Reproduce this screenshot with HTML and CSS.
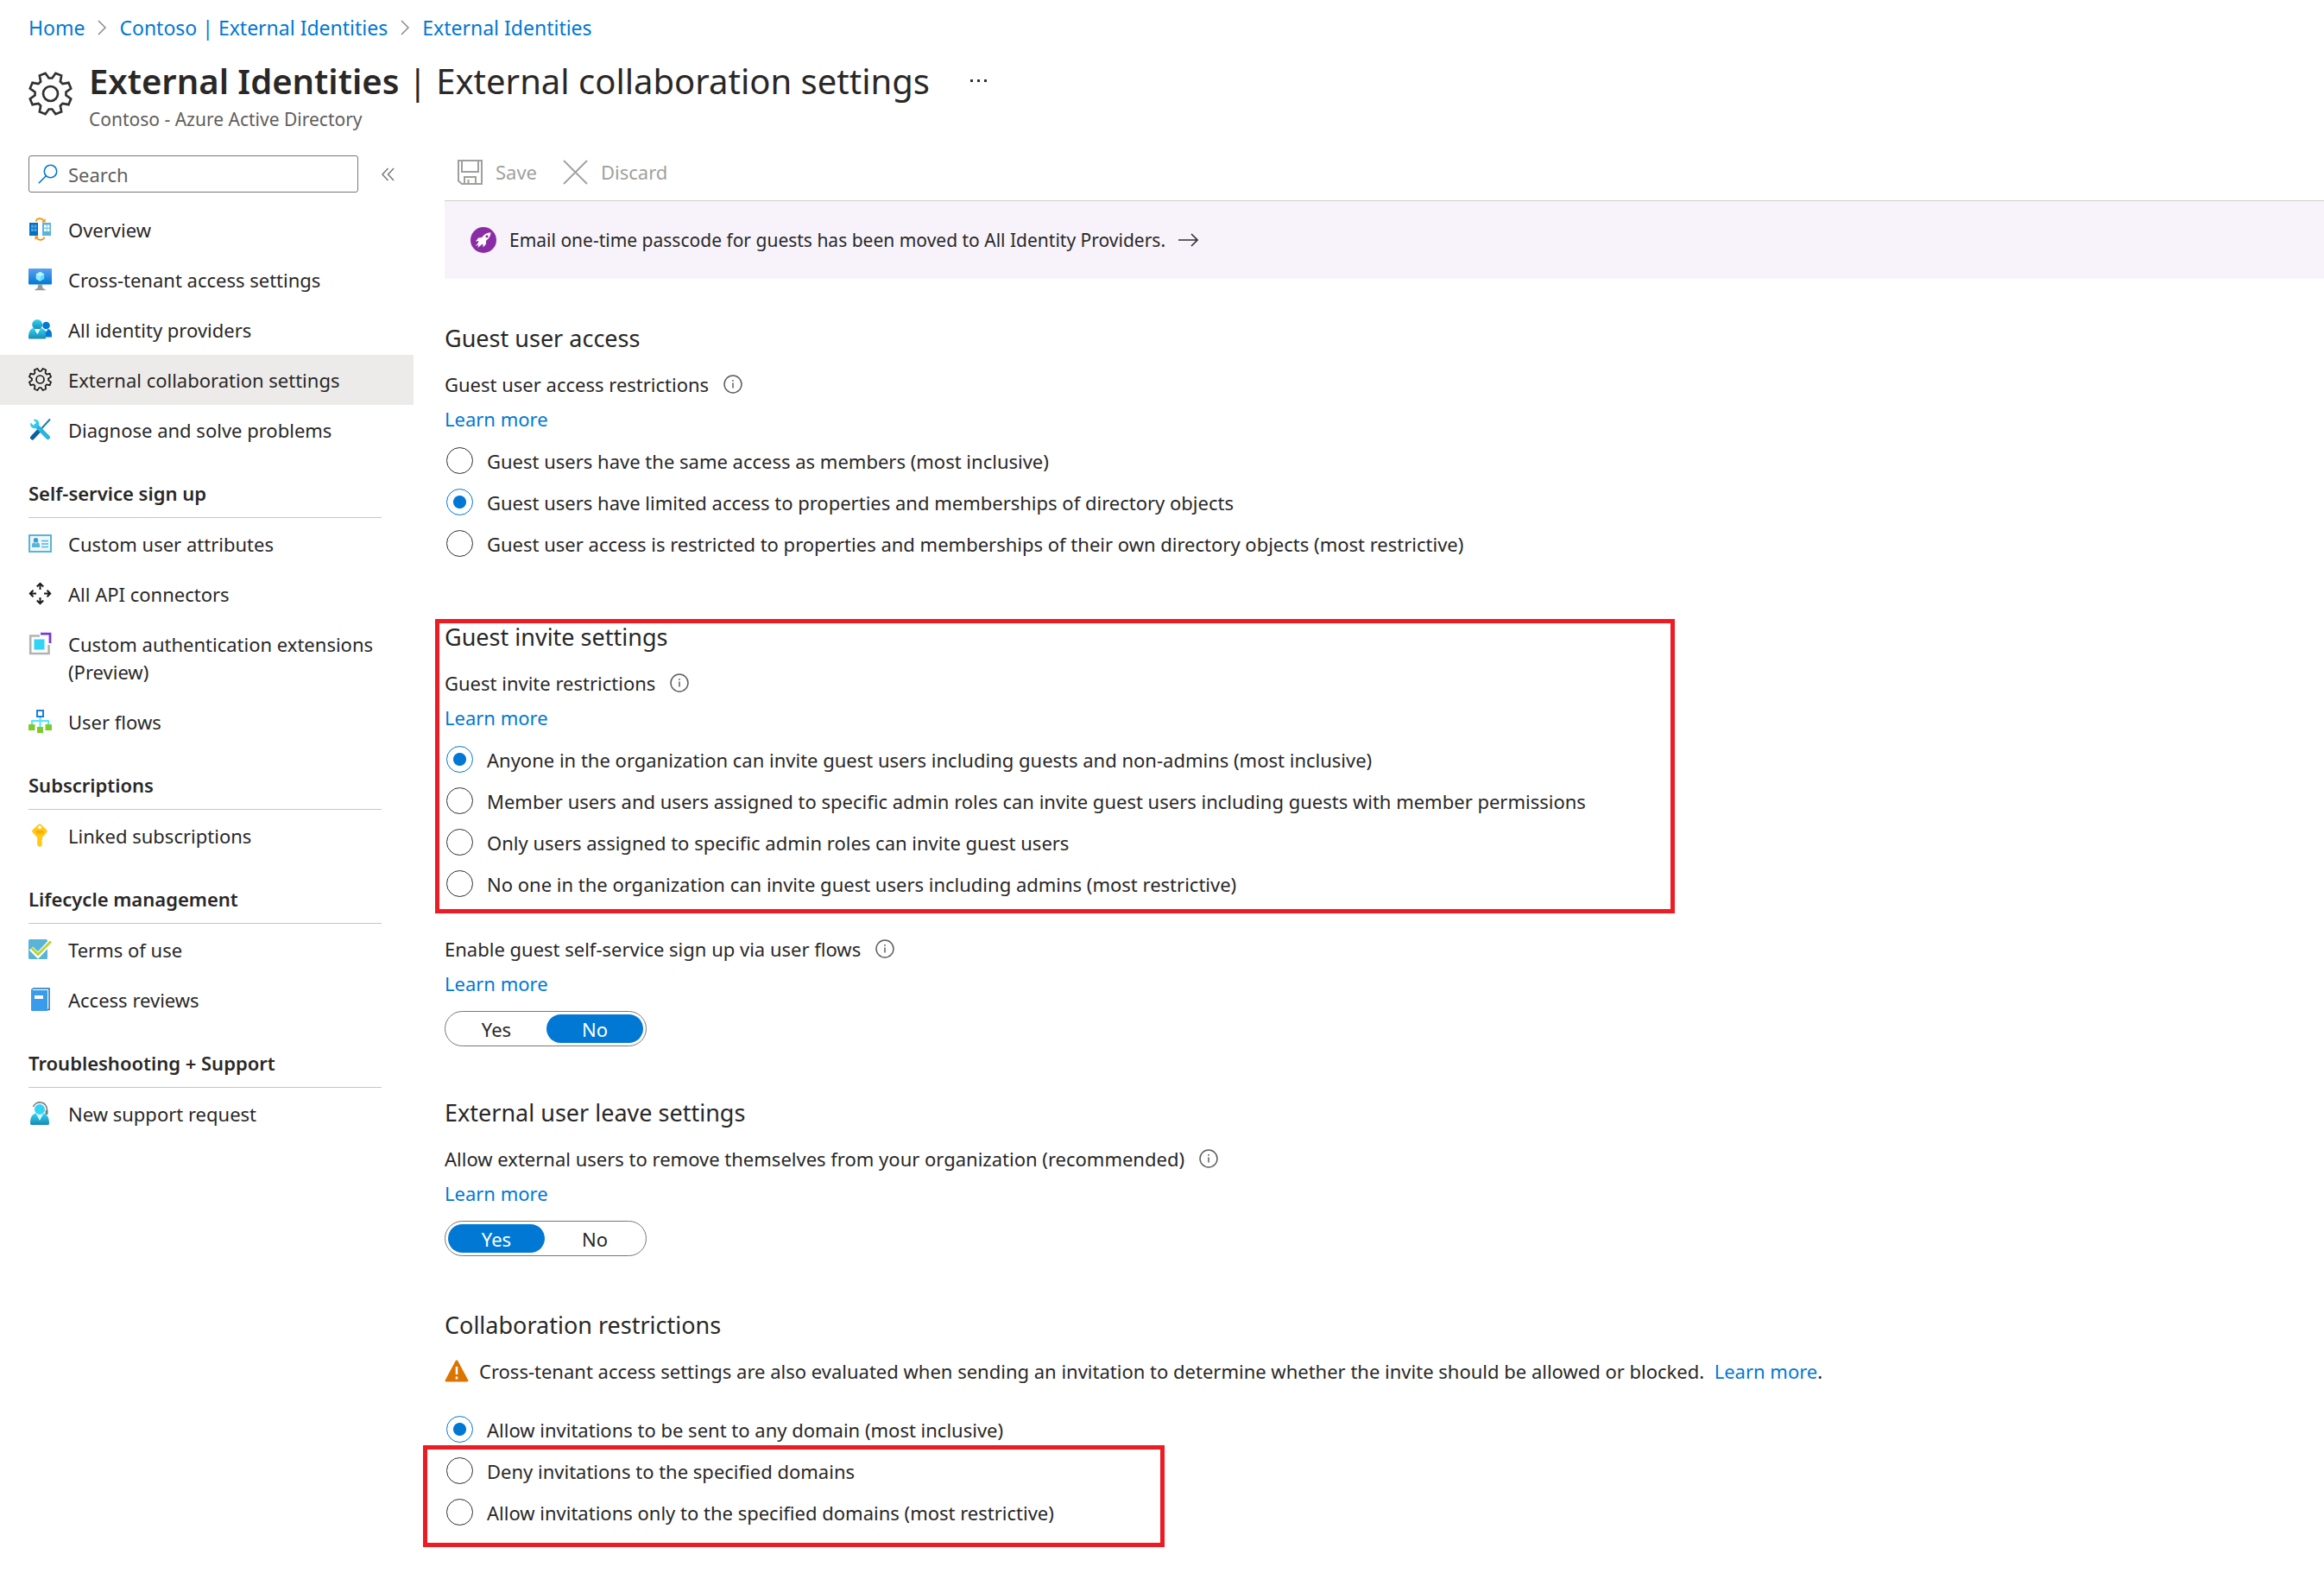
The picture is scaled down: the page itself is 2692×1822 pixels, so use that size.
FILE: index.html
```html
<!DOCTYPE html>
<html lang="en">
<head>
<meta charset="utf-8">
<meta name="viewport" content="width=device-width, initial-scale=1">
<title>External Identities | External collaboration settings</title>
<link rel="stylesheet" href="styles.css">
</head>
<body>
<svg class="defs" width="0" height="0" aria-hidden="true">
  <defs>
    <linearGradient id="cyan" x1="0" y1="0" x2="0" y2="1"><stop offset="0" stop-color="#32d4f5"/><stop offset="1" stop-color="#198ab3"/></linearGradient>
    <linearGradient id="blue" x1="0" y1="0" x2="0" y2="1"><stop offset="0" stop-color="#5ea0ef"/><stop offset="1" stop-color="#0078d4"/></linearGradient>
    <symbol id="gear" viewBox="0 0 48 48">
      <path fill="none" stroke="currentColor" stroke-linejoin="miter" d="M25.8 7.1 29.6 1.7 35.9 4.3 34.7 10.8 37.2 13.3 43.7 12.1 46.3 18.4 40.9 22.2V25.8L46.3 29.6 43.7 35.9 37.2 34.7 34.7 37.2 35.9 43.7 29.6 46.3 25.8 40.9H22.2L18.4 46.3 12.1 43.7 13.3 37.2 10.8 34.7 4.3 35.9 1.7 29.6 7.1 25.8V22.2L1.7 18.4 4.3 12.1 10.8 13.3 13.3 10.8 12.1 4.3 18.4 1.7 22.2 7.1Z"/>
      <circle cx="24" cy="24" r="8" fill="none" stroke="currentColor"/>
    </symbol>
    <symbol id="info" viewBox="0 0 22 22">
      <circle cx="11" cy="11" r="10" fill="none" stroke="#605e5c" stroke-width="1.5"/>
      <path d="M11 9.5v6M11 6v1.8" stroke="#605e5c" stroke-width="1.5"/>
    </symbol>
    <symbol id="sep" viewBox="0 0 10 18"><path d="M1 1l8 8-8 8" fill="none" stroke="#8a8886" stroke-width="1.5"/></symbol>
  </defs>
</svg>

<nav class="crumbs" aria-label="Breadcrumb">
  <a href="#">Home</a>
  <svg class="sep"><use href="#sep"/></svg>
  <a href="#">Contoso | External Identities</a>
  <svg class="sep"><use href="#sep"/></svg>
  <a href="#">External Identities</a>
</nav>

<header class="title">
  <svg class="title-icon"><use href="#gear"/></svg>
  <div>
    <div class="title-row">
      <h1><strong>External Identities</strong> | External collaboration settings</h1>
      <button class="more" aria-label="More actions"><svg width="22" height="4" viewBox="0 0 22 4"><g fill="#323130"><rect x="1" width="3" height="3"/><rect x="9" width="3" height="3"/><rect x="17" width="3" height="3"/></g></svg></button>
    </div>
    <p class="subtitle">Contoso - Azure Active Directory</p>
  </div>
</header>

<div class="body">
  <aside class="side">
    <div class="search-row">
      <label class="search">
        <svg width="23" height="23" viewBox="0 0 23 23"><g fill="none" stroke="#0078d4" stroke-width="1.6"><circle cx="14.5" cy="8.500" r="7.2"/><path d="M9.300 13.700.8 22.200"/></g></svg>
        <input type="text" placeholder="Search" aria-label="Search">
      </label>
      <button class="collapse" aria-label="Collapse menu"><svg width="15" height="16" viewBox="0 0 15 16"><path d="M7.500 1 1 8l6.500 7M14 1 7.500 8l6.500 7" fill="none" stroke="#797775" stroke-width="1.5"/></svg></button>
    </div>
    <nav class="menu" aria-label="Settings">
      <a href="#"><svg viewBox="0 0 27 27"><rect x="1" y="6" width="10" height="15" fill="#0072c6"/><rect x="16" y="6" width="10" height="15" fill="#59b4d9"/><path fill="#59a4d9" d="M3 8.500h2.800v3.300H3zM6.600 8.500h2.800v3.300H6.600zM3 12.700h2.800V16H3zM6.600 12.700h2.800V16H6.600z"/><path fill="#fff" d="M18 8.500h2.800v3.300H18zM21.600 8.500h2.800v3.300h-2.800zM18 12.700h2.800V16H18zM21.600 12.700h2.800V16h-2.800z"/><g fill="none" stroke="#ff8c00" stroke-width="1.600"><path d="M8.500 4.500C9.500 .3 15.500.1 17.700 3.500"/><path d="M18.500 22.500C17.500 26.700 11.500 26.900 9.300 23.500"/></g><path fill="#ff8c00" d="M19.500 1v4.500h-4.500zM7.500 26v-4.500H12z"/></svg>Overview</a>
      <a href="#"><svg viewBox="0 0 27 27"><rect y="1" width="27" height="18.500" rx="1" fill="url(#blue)"/><path d="M13.500 4.800 18.200 7.500v5.500l-4.700 2.700L8.800 13V7.500z" fill="#50e6ff"/><path d="M8.800 7.500l4.700 2.700v5.500L8.800 13z" fill="#9cebff"/><path d="M13.500 4.800l4.700 2.700-4.700 2.700-4.700-2.700z" fill="#c3f1ff"/><path d="M11 19.500h5c0 3.500.5 5 3.500 5.500v1.200h-12V25c3-.5 3.500-2 3.500-5.500z" fill="#9a9a9a"/></svg>Cross-tenant access settings</a>
      <a href="#"><svg viewBox="0 0 27 27"><g fill="#0078d4"><circle cx="20.500" cy="9" r="4.300"/><path d="M17 22.500h10v-3c0-4-2-6-4.500-6.500l-2 3.500-3-3z"/></g><circle cx="10.200" cy="8" r="6" fill="url(#cyan)"/><path d="M0 23c0-6.500 2-10.500 6.300-11l4 7 4-7c4.200.5 5.900 4.500 5.900 11 0 1-.5 1.500-1.500 1.500H1.500C.5 24.500 0 24 0 23z" fill="url(#cyan)"/><path d="M7.500 13h5.300l-2.600 6z" fill="#fff"/></svg>All identity providers</a>
      <a href="#" class="current" aria-current="page"><svg class="small-gear"><use href="#gear"/></svg>External collaboration settings</a>
      <a href="#"><svg viewBox="0 0 27 27"><path d="M25 1.500 15 12.500" stroke="#1b7fb5" stroke-width="2"/><path d="M13 14 4.500 23" stroke="#0f5f9e" stroke-width="5" stroke-linecap="round"/><path d="M9 9 22.500 22.500" stroke="#29b5de" stroke-width="5" stroke-linecap="round"/><path d="M5.500 2c4-1.500 8 2 6.500 6.500L8.500 12C4.500 13 1 9.500 2.500 5.500l3.200 3 2.500-.8.600-2.500z" fill="#32c8ee"/></svg>Diagnose and solve problems</a>

      <h2>Self-service sign up</h2>
      <a href="#"><svg viewBox="0 0 27 27"><rect x="1" y="4" width="25" height="19" fill="#eef7fb" stroke="#59b4d9" stroke-width="2"/><circle cx="8.500" cy="9.800" r="2.700" fill="#3a9cc9"/><path d="M4 18v-2.500c0-2 1.500-3.200 3-3.200l1.500 1.700 1.500-1.700c1.500 0 3 1.200 3 3.200V18z" fill="#59b4d9"/><path d="M15 10.500h8M15 14h8M15 17.500h8" stroke="#59b4d9" stroke-width="1.600"/></svg>Custom user attributes</a>
      <a href="#"><svg viewBox="0 0 27 27"><path fill="none" stroke="#1b1a19" stroke-width="2" d="M13.500 9V2M9.800 5.500 13.500 1.800 17.200 5.500M13.500 18v7M9.800 21.500l3.700 3.700 3.700-3.700M9 13.500H2M5.500 9.800 1.800 13.500 5.500 17.200M18 13.500h7M21.500 9.800l3.700 3.700-3.700 3.700"/></svg>All API connectors</a>
      <a href="#"><svg viewBox="0 0 27 27"><path d="M13 4.500H2.200v20.500H23.500V15" fill="none" stroke="#b3b3b3" stroke-width="2.600"/><path d="M14 2.200h11V13" fill="none" stroke="#773adc" stroke-width="2.800"/><rect x="6.500" y="8.500" width="12" height="12" fill="#32d4f5"/></svg>Custom authentication extensions (Preview)</a>
      <a href="#"><svg viewBox="0 0 27 27"><path d="M13.500 9v11M4 18v-5h19v5" fill="none" stroke="#50e6ff" stroke-width="2"/><rect x="10" y="1" width="7" height="7" fill="#fff" stroke="#1b7fd8" stroke-width="2"/><path fill="#7fcb2b" d="M0 17h7.500v7H0zM10 20h7v7h-7zM19.500 17H27v7h-7.500z"/></svg>User flows</a>

      <h2>Subscriptions</h2>
      <a href="#"><svg viewBox="0 0 27 27"><path d="M13 0.500c1 0 1.500.3 2.200 1l5.600 5.600c1.200 1.200 1.200 2.200 0 3.400L16 16v3l-1.300 1.300L16 21.500v1.300l-1 1 1 1.200-2.800 2.200L10.200 25v-9L5 10.500c-1.200-1.200-1.200-2.200 0-3.400l5.800-5.600c.7-.7 1.200-1 2.200-1z" fill="#ffc915"/><circle cx="13" cy="4.200" r="1.900" fill="#fff"/><path d="M9 8.800h8.500M9 11h8.500" stroke="#ff9300" stroke-width="1.200"/></svg>Linked subscriptions</a>

      <h2>Lifecycle management</h2>
      <a href="#"><svg viewBox="0 0 27 27"><rect y="2" width="22" height="23" rx="1.500" fill="#59b4d9"/><path d="M3 12.500l8 8L26 4.500" fill="none" stroke="#fff" stroke-width="6"/><path d="M3.500 12l7.500 7.500L26 4.500" fill="none" stroke="#b8d432" stroke-width="3"/></svg>Terms of use</a>
      <a href="#"><svg viewBox="0 0 27 27"><path d="M5 1h19v24.500h-3" fill="#fff" stroke="#1b6fb8" stroke-width="1.500"/><path d="M3 3c0-1.500 1-2.300 2-2.300V3h17v24H4.500C3.500 27 3 26.500 3 26z" fill="#3a9bea"/><rect x="7" y="9" width="10" height="4" fill="#fff"/></svg>Access reviews</a>

      <h2>Troubleshooting + Support</h2>
      <a href="#"><svg viewBox="0 0 27 27"><path d="M5.500 6C8-1.500 22-1.500 21.500 11" fill="none" stroke="#76787a" stroke-width="1.600"/><circle cx="13" cy="9" r="6" fill="#32d4f5"/><path d="M2 25c0-7 2.500-10.500 6.500-11.500l4.500 8 4.500-8c4 1 6.500 4.500 6.500 11.500 0 1.300-.5 2-1.500 2h-19C2.500 27 2 26.300 2 25z" fill="url(#cyan)"/><path d="M10 15h6l-3 7z" fill="#d5f4fb"/><rect x="19.500" y="10" width="3" height="5" rx="1" fill="#76787a"/></svg>New support request</a>
    </nav>
  </aside>

  <main class="main">
    <div class="toolbar">
      <button disabled><svg width="29" height="29" viewBox="0 0 29 29"><g fill="none" stroke="#a19f9d" stroke-width="2"><path d="M1 1h27v27H5L1 24.500z"/><path d="M5 1v13h19V1"/><path d="M8 28v-8h13v8M12.500 28v-5"/></g></svg>Save</button>
      <button disabled><svg width="29" height="29" viewBox="0 0 29 29"><path d="M1 1l27 27M28 1 1 28" fill="none" stroke="#a19f9d" stroke-width="1.800"/></svg>Discard</button>
    </div>
    <a class="banner" href="#">
      <svg width="30" height="30" viewBox="0 0 30 30"><circle cx="15" cy="15" r="15" fill="#8a2da5"/><path d="M23.500 6.200c-4.500.3-7.500 2-10.300 5.800l-4 .6L6 16.500l3.700-.3-1 2.300L6 22l3.500-1.500L8.500 24l3-2.500 1.500-1.200 1.500-.8v4l3.300-3.500.3-4.300c3.500-2.600 5.300-5.500 5.400-9.500z" fill="#fff"/><circle cx="19" cy="10.800" r="1.600" fill="#8a2da5"/></svg>
      <span>Email one-time passcode for guests has been moved to All Identity Providers.</span>
      <svg width="23" height="16" viewBox="0 0 23 16"><path d="M0 8h22M15 1l7 7-7 7" fill="none" stroke="#323130" stroke-width="1.600"/></svg>
    </a>

    <div class="content">
      <section class="access">
        <h2>Guest user access</h2>
        <p class="label">Guest user access restrictions <svg><use href="#info"/></svg></p>
        <a class="learn" href="#">Learn more</a>
        <div class="options">
          <label><input type="radio" name="access"><span>Guest users have the same access as members (most inclusive)</span></label>
          <label><input type="radio" name="access" checked><span>Guest users have limited access to properties and memberships of directory objects</span></label>
          <label><input type="radio" name="access"><span>Guest user access is restricted to properties and memberships of their own directory objects (most restrictive)</span></label>
        </div>
      </section>

      <section class="invite framed">
        <h2>Guest invite settings</h2>
        <p class="label">Guest invite restrictions <svg><use href="#info"/></svg></p>
        <a class="learn" href="#">Learn more</a>
        <div class="options">
          <label><input type="radio" name="invite" checked><span>Anyone in the organization can invite guest users including guests and non-admins (most inclusive)</span></label>
          <label><input type="radio" name="invite"><span>Member users and users assigned to specific admin roles can invite guest users including guests with member permissions</span></label>
          <label><input type="radio" name="invite"><span>Only users assigned to specific admin roles can invite guest users</span></label>
          <label><input type="radio" name="invite"><span>No one in the organization can invite guest users including admins (most restrictive)</span></label>
        </div>
      </section>

      <section class="signup">
        <p class="label">Enable guest self-service sign up via user flows <svg><use href="#info"/></svg></p>
        <a class="learn" href="#">Learn more</a>
        <div class="toggle" role="group" aria-label="Enable guest self-service sign up">
          <button aria-pressed="false">Yes</button><button aria-pressed="true">No</button>
        </div>
      </section>

      <section class="leave">
        <h2>External user leave settings</h2>
        <p class="label">Allow external users to remove themselves from your organization (recommended) <svg><use href="#info"/></svg></p>
        <a class="learn" href="#">Learn more</a>
        <div class="toggle" role="group" aria-label="Allow external users to leave">
          <button aria-pressed="true">Yes</button><button aria-pressed="false">No</button>
        </div>
      </section>

      <section class="collab">
        <h2>Collaboration restrictions</h2>
        <p class="warning">
          <svg width="28" height="26" viewBox="0 0 28 26"><path d="M14 .5c.8 0 1.200.5 1.600 1.200l11.500 21.500c.7 1.300.2 2.300-1.300 2.300H2.200c-1.500 0-2-1-1.300-2.300L12.400 1.700c.4-.7.8-1.200 1.600-1.200z" fill="#db7500"/><path d="M14 8v9M14 19.500v3" stroke="#fff" stroke-width="2.500"/></svg>
          <span>Cross-tenant access settings are also evaluated when sending an invitation to determine whether the invite should be allowed or blocked.&nbsp; <a href="#">Learn more</a>.</span>
        </p>
        <div class="options">
          <label><input type="radio" name="domains" checked><span>Allow invitations to be sent to any domain (most inclusive)</span></label>
          <div class="options framed">
            <label><input type="radio" name="domains"><span>Deny invitations to the specified domains</span></label>
            <label><input type="radio" name="domains"><span>Allow invitations only to the specified domains (most restrictive)</span></label>
          </div>
        </div>
      </section>
    </div>
  </main>
</div>
</body>
</html>
```
FILE: styles.css
```css
* { box-sizing: border-box; }
body {
  margin: 0;
  background: #fff;
  color: #292827;
  font-family: "Noto Sans", "Open Sans", sans-serif;
  font-size: 22px;
  line-height: 32px;
}
h1, h2, p { margin: 0; font-weight: 400; }
a { color: #0078d4; text-decoration: none; }
button, input { font: inherit; color: inherit; margin: 0; }
button { border: 0; padding: 0; background: none; }
svg { flex: none; display: block; }
.defs { position: absolute; }

.crumbs { display: flex; align-items: center; gap: 15px; padding: 16px 33px; font-size: 23px; }
.sep { width: 10px; height: 18px; }

.title { display: flex; gap: 19px; padding: 2px 33px 0; }
.title-icon { width: 51px; height: 51px; margin-top: 17px; stroke-width: 2.5px; color: #323130; }
.title-row { display: flex; align-items: center; gap: 46px; }
.title h1 { font-size: 40px; line-height: 56px; }
.title strong { font-weight: 600; }
.subtitle { color: #605e5c; font-size: 21px; }

.body { display: flex; align-items: flex-start; }
.side { flex: none; width: 479px; padding-top: 26px; }
.search-row { display: flex; align-items: center; gap: 27px; padding: 0 22px 14px 33px; }
.search {
  flex: 1;
  display: flex;
  align-items: center;
  gap: 12px;
  height: 43px;
  padding: 0 10px;
  border: 1px solid #797775;
  border-radius: 3px;
}
.search input { flex: 1; min-width: 0; border: 0; padding: 0; outline: 0; background: none; }
.search input::placeholder { color: #605e5c; opacity: 1; }

.menu a {
  display: flex;
  gap: 19px;
  padding: 13px 33px;
  color: inherit;
}
.menu svg { width: 27px; height: 27px; margin-top: 2px; }
.menu .small-gear { stroke-width: 3px; color: #1b1a19; }
.menu .current { background: #edebe9; }
.menu h2 {
  margin: 0 37px 1px 33px;
  padding: 28px 0 12px;
  border-bottom: 1px solid #c8c6c4;
  font-size: 22px;
  font-weight: 600;
}

.main { flex: 1; min-width: 0; margin-left: 36px; padding-top: 20px; }
.toolbar { display: flex; gap: 30px; padding: 9px 15px 17px; border-bottom: 1px solid #d2d0ce; }
.toolbar button { display: flex; align-items: center; gap: 15px; color: #a19f9d; }
.banner {
  display: flex;
  align-items: center;
  gap: 15px;
  height: 90px;
  padding: 0 30px;
  background: #f8f3fb;
  color: inherit;
  font-size: 21px;
}

.content { padding: 49px 0 23px; }
.content h2 { margin-bottom: 13px; font-size: 27px; line-height: 40px; }
.label { display: flex; align-items: center; gap: 17px; line-height: 40px; }
.label svg { width: 22px; height: 22px; }
.learn { display: table; line-height: 40px; }
.options { display: flex; flex-direction: column; gap: 15px; }
.learn + .options { margin-top: 13px; }
.options label { display: flex; align-items: flex-start; gap: 16px; padding-left: 2px; line-height: 33px; }
.options input {
  appearance: none;
  flex: none;
  width: 31px;
  height: 31px;
  border: 1px solid #323130;
  border-radius: 50%;
  background: #fff;
}
.options input:checked {
  border-color: #0078d4;
  background: radial-gradient(circle, #0078d4 7px, #fff 8px);
}

.toggle {
  display: inline-flex;
  gap: 2px;
  height: 41px;
  margin-top: 12px;
  padding: 3px;
  border: 1px solid #797775;
  border-radius: 21px;
}
.toggle button { width: 112px; border-radius: 17px; }
.toggle button[aria-pressed="true"] { background: #0078d4; color: #fff; }

.invite { margin-top: 71px; }
.signup { margin-top: 38px; }
.leave { margin-top: 57px; }
.collab { margin-top: 60px; }
.signup, .leave { display: flow-root; }

.warning { display: flex; align-items: center; gap: 12px; margin-bottom: 32px; line-height: 40px; }

/* Highlight frames drawn around the settings */
.framed { position: relative; }
.framed::after {
  content: "";
  position: absolute;
  border: 5px solid #ed1c24;
  pointer-events: none;
}
.invite::after { top: -1px; bottom: -17px; left: -11px; width: 1436px; }
.options.framed::after { top: -14px; bottom: -23px; left: -25px; width: 858px; }
.invite::after { width: 1426px; }
.options.framed::after { width: 849px; }
```
